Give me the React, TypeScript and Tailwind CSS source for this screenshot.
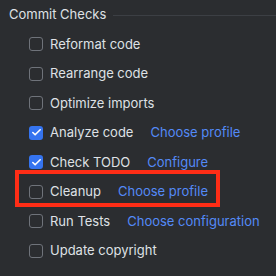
import { Check } from 'lucide-react';

type Item = { label: string; checked?: boolean; link?: string; highlight?: boolean };

const items: Item[] = [
	{ label: 'Reformat code' },
	{ label: 'Rearrange code' },
	{ label: 'Optimize imports' },
	{ label: 'Analyze code', checked: true, link: 'Choose profile' },
	{ label: 'Check TODO', checked: true, link: 'Configure' },
	{ label: 'Cleanup', link: 'Choose profile', highlight: true },
	{ label: 'Run Tests', link: 'Choose configuration' },
	{ label: 'Update copyright' },
];

function CheckBox({ checked }: { checked?: boolean }) {
	if (checked) {
		return (
			<div className="w-[14px] h-[14px] rounded-[3px] bg-[#3574f0] flex items-center justify-center shrink-0">
				<Check size={11} strokeWidth={3.5} color="#ffffff" />
			</div>
		);
	}
	return <div className="w-[14px] h-[14px] rounded-[3px] border border-[#6f737a] shrink-0" />;
}

function Row({ item }: { item: Item }) {
	const inner = (
		<div className="flex items-center h-full">
			<CheckBox checked={item.checked} />
			<span className="ml-[7px] text-[#dfe1e5]">{item.label}</span>
			{item.link && <span className="ml-[17px] text-[#548af7]">{item.link}</span>}
		</div>
	);

	if (item.highlight) {
		// red annotation frame around the Cleanup row
		return (
			<div className="h-[29.5px] relative">
				<div className="absolute left-[-14px] top-[-7px] w-[205px] h-[37px] border-4 border-[#ff2d16]" />
				{inner}
			</div>
		);
	}
	return <div className="h-[29.5px]">{inner}</div>;
}

export default function App() {
	return (
		<div
			className="w-[276px] h-[276px] bg-[#2b2d30] text-[13px] overflow-hidden"
			style={{ fontFamily: 'Inter, "Noto Sans", sans-serif' }}
		>
			<div className="flex items-center h-[30px] pl-[9px]">
				<span className="text-[#dfe1e5]">Commit Checks</span>
				<div className="flex-1 h-px bg-[#3c3f44] ml-[7px]" />
			</div>
			<div className="pl-[29px] -mt-[0.5px]">
				{items.map((item) => (
					<Row key={item.label} item={item} />
				))}
			</div>
		</div>
	);
}
